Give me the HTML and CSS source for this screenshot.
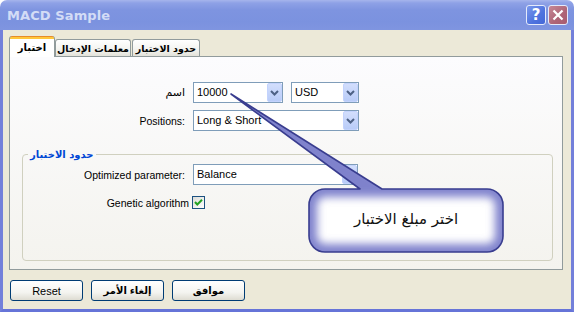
FILE: index.html
```html
<!DOCTYPE html>
<html lang="ar">
<head>
<meta charset="utf-8">
<title>MACD Sample</title>
<link rel="stylesheet" href="styles.css">
</head>
<body>
<div class="window" dir="ltr">
  <div class="titlebar">
    <span class="title">MACD Sample</span>
    <div class="tbtns">
      <span class="tb help">?</span>
      <span class="tb close"><svg width="12" height="12" viewBox="0 0 12 12"><path d="M1.5 1.5 L10.5 10.5 M10.5 1.5 L1.5 10.5" stroke="#fff" stroke-width="2.2" fill="none"/></svg></span>
    </div>
  </div>
  <div class="client">
    <div class="tabs">
      <div class="tab active t1">اختبار</div>
      <div class="tab t2">معلمات الإدخال</div>
      <div class="tab t3">حدود الاختبار</div>
    </div>
    <div class="panel">
      <div class="row r1">
        <span class="lbl">اسم</span>
        <div class="combo w90"><span class="val">10000</span><span class="dd"><svg width="9" height="6" viewBox="0 0 9 6"><polyline points="1,1 4.5,4.5 8,1" fill="none" stroke="#4D6185" stroke-width="2"/></svg></span></div>
        <div class="combo w68 gapl"><span class="val">USD</span><span class="dd"><svg width="9" height="6" viewBox="0 0 9 6"><polyline points="1,1 4.5,4.5 8,1" fill="none" stroke="#4D6185" stroke-width="2"/></svg></span></div>
      </div>
      <div class="row r2">
        <span class="lbl">Positions:</span>
        <div class="combo w166"><span class="val">Long &amp; Short</span><span class="dd"><svg width="9" height="6" viewBox="0 0 9 6"><polyline points="1,1 4.5,4.5 8,1" fill="none" stroke="#4D6185" stroke-width="2"/></svg></span></div>
      </div>
      <fieldset class="group">
        <legend>حدود الاختبار</legend>
        <div class="row g1">
          <span class="lbl">Optimized parameter:</span>
          <div class="combo w165"><span class="val">Balance</span><span class="dd"><svg width="9" height="6" viewBox="0 0 9 6"><polyline points="1,1 4.5,4.5 8,1" fill="none" stroke="#4D6185" stroke-width="2"/></svg></span></div>
        </div>
        <div class="row g2">
          <span class="lbl">Genetic algorithm</span>
          <span class="check"><svg width="11" height="11" viewBox="0 0 11 11"><path d="M2 5 L4.3 7.5 L9 2.8" fill="none" stroke="#21A121" stroke-width="2"/></svg></span>
        </div>
      </fieldset>
    </div>
    <div class="buttons">
      <button class="btn">Reset</button>
      <button class="btn ar">إلغاء الأمر</button>
      <button class="btn ar">موافق</button>
    </div>
  </div>
  <div class="callout">
    <svg class="callout-shape" width="278" height="164" viewBox="0 0 278 164">
      <defs>
        <clipPath id="cc">
          <path d="M2 2 L153 97 H258 A16 16 0 0 1 274 113 V144 A16 16 0 0 1 258 160 H96 A16 16 0 0 1 80 144 V113 A16 16 0 0 1 96 97 H131 Z"/>
        </clipPath>
        <filter id="bl" x="-20%" y="-20%" width="140%" height="140%">
          <feGaussianBlur stdDeviation="4"/>
        </filter>
      </defs>
      <path d="M2 2 L153 97 H258 A16 16 0 0 1 274 113 V144 A16 16 0 0 1 258 160 H96 A16 16 0 0 1 80 144 V113 A16 16 0 0 1 96 97 H131 Z" fill="#ffffff"/>
      <g clip-path="url(#cc)">
        <path d="M2 2 L153 97 H258 A16 16 0 0 1 274 113 V144 A16 16 0 0 1 258 160 H96 A16 16 0 0 1 80 144 V113 A16 16 0 0 1 96 97 H131 Z" fill="none" stroke="#7F82CC" stroke-width="16" filter="url(#bl)"/>
      </g>
      <path d="M2 2 L153 97 H258 A16 16 0 0 1 274 113 V144 A16 16 0 0 1 258 160 H96 A16 16 0 0 1 80 144 V113 A16 16 0 0 1 96 97 H131 Z" fill="none" stroke="#393D8F" stroke-width="1.6" stroke-linejoin="round"/>
    </svg>
    <div class="callout-text">اختر مبلغ الاختبار</div>
  </div>
</div>
</body>
</html>
```
FILE: styles.css
```css
html, body {
  margin: 0;
  padding: 0;
}
body {
  width: 574px;
  height: 312px;
  overflow: hidden;
  background: #ffffff;
  font-family: "Liberation Sans", "DejaVu Sans", sans-serif;
  font-size: 10.5px;
  color: #000;
}
.window {
  position: relative;
  width: 574px;
  height: 312px;
  display: flex;
  flex-direction: column;
}
.titlebar {
  height: 30px;
  flex: none;
  box-sizing: border-box;
  display: flex;
  align-items: center;
  padding: 0 6px 0 7px;
  border-radius: 7px 7px 0 0;
  background: linear-gradient(#A6B5EC 0, #8EA1E6 3px, #7E94E0 10px, #7B92DF 22px, #7F95E0 30px);
}
.title {
  font-family: "DejaVu Sans", sans-serif;
  font-weight: bold;
  font-size: 13px;
  color: #D3DCF6;
  letter-spacing: 0.1px;
}
.tbtns {
  margin-left: auto;
  display: flex;
  gap: 2px;
  margin-top: -1px;
}
.tb {
  width: 20px;
  height: 20px;
  box-sizing: border-box;
  border: 1px solid #E4EAFB;
  border-radius: 3px;
  display: flex;
  align-items: center;
  justify-content: center;
}
.help {
  background: linear-gradient(135deg, #7A98EC, #4E73DE 60%, #4468D8);
  color: #ffffff;
  font-family: "DejaVu Sans", sans-serif;
  font-weight: bold;
  font-size: 15px;
  line-height: 18px;
}
.close {
  background: linear-gradient(135deg, #C68896, #AE6577 60%, #A85C70);
}
.client {
  flex: 1;
  box-sizing: border-box;
  border: 3px solid #7380DA;
  border-top: 0;
  border-bottom-color: #6674D8;
  background: #ECE9D8;
  padding: 6px 0 0 6px;
  display: flex;
  flex-direction: column;
}
.tabs {
  display: flex;
  align-items: flex-start;
  height: 20px;
  position: relative;
  z-index: 1;
}
.tab {
  box-sizing: border-box;
  display: flex;
  align-items: center;
  justify-content: center;
  font-family: "DejaVu Sans", sans-serif;
  font-weight: bold;
  font-size: 9.5px;
  border: 1px solid #919B9C;
  border-bottom: 0;
  border-radius: 3px 3px 0 0;
  white-space: nowrap;
  overflow: hidden;
}
.tab:not(.active) {
  margin-top: 3px;
  height: 17px;
  background: linear-gradient(#FFFFFF, #F3F3EF 60%, #E3E2DA);
}
.tab.active {
  height: 21px;
  border-top: 0;
  background: linear-gradient(#E68B2C 0 1px, #FFC73C 1px 3px, #FFFFFF 3px);
  padding-top: 2px;
  font-size: 10px;
}
.t1 { width: 46px; }
.t2 { width: 76px; }
.t3 { width: 68px; margin-left: 1px; }
.panel {
  width: 554px;
  height: 214px;
  box-sizing: border-box;
  border: 1px solid #919B9C;
  background: linear-gradient(#FCFCFE, #F4F3EE);
  padding-top: 25px;
}
.row {
  display: flex;
  align-items: center;
}
.lbl {
  flex: none;
  width: 175px;
  margin-right: 8px;
  text-align: right;
  white-space: nowrap;
}
.r1 .lbl {
  font-size: 11px;
}
.r2 { margin-top: 7px; }
.combo {
  flex: none;
  height: 21px;
  box-sizing: border-box;
  border: 1px solid #7F9DB9;
  background: #ffffff;
  display: flex;
}
.combo .val {
  flex: 1;
  padding-left: 3px;
  line-height: 19px;
  font-size: 11px;
  white-space: nowrap;
  overflow: hidden;
}
.combo .dd {
  flex: none;
  width: 15px;
  box-sizing: border-box;
  border: 1px solid #C3D3FD;
  border-radius: 2px;
  background: linear-gradient(#D2DEFC, #B9CCF8);
  display: flex;
  align-items: center;
  justify-content: center;
}
.w90 { width: 90px; }
.w68 { width: 68px; }
.w166 { width: 166px; }
.w165 { width: 165px; }
.gapl { margin-left: 8px; }
.group {
  margin: 17px 0 0 12px;
  width: 531px;
  box-sizing: border-box;
  border: 1px solid #D0D0BF;
  border-radius: 4px;
  padding: 0 0 51px 0;
  min-width: 0;
}
.group legend {
  margin-left: 5px;
  padding: 0 2px;
  color: #0046D5;
  font-family: "DejaVu Sans", sans-serif;
  font-weight: bold;
  font-size: 10px;
  line-height: 13px;
}
.g1 { margin-top: 3px; }
.g1 .lbl { width: 162px; }
.g2 { margin-top: 11px; }
.g2 .lbl { width: 166px; margin-right: 3px; }
.check {
  width: 13px;
  height: 13px;
  box-sizing: border-box;
  border: 1px solid #1C5180;
  background: linear-gradient(135deg, #DCDCD7, #FFFFFF);
  display: flex;
  align-items: center;
  justify-content: center;
}
.buttons {
  display: flex;
  gap: 8px;
  margin: 10px 0 0 1px;
}
.btn {
  width: 73px;
  height: 21px;
  box-sizing: border-box;
  border: 1px solid #003C74;
  border-radius: 3px;
  background: linear-gradient(#FFFFFF, #F4F4F0 60%, #DEDCD2);
  font-family: "Liberation Sans", "DejaVu Sans", sans-serif;
  font-size: 11px;
  color: #000;
  padding: 0;
}
.btn.ar {
  font-weight: bold;
  font-size: 10px;
}
.callout {
  position: absolute;
  left: 229px;
  top: 92px;
  width: 278px;
  height: 164px;
  pointer-events: none;
}
.callout-shape {
  position: absolute;
  left: 0;
  top: 0;
}
.callout-text {
  position: absolute;
  left: 80px;
  top: 97px;
  width: 194px;
  height: 60px;
  display: flex;
  align-items: center;
  justify-content: center;
  font-family: "DejaVu Sans", sans-serif;
  font-size: 15px;
  color: #111;
}
```
